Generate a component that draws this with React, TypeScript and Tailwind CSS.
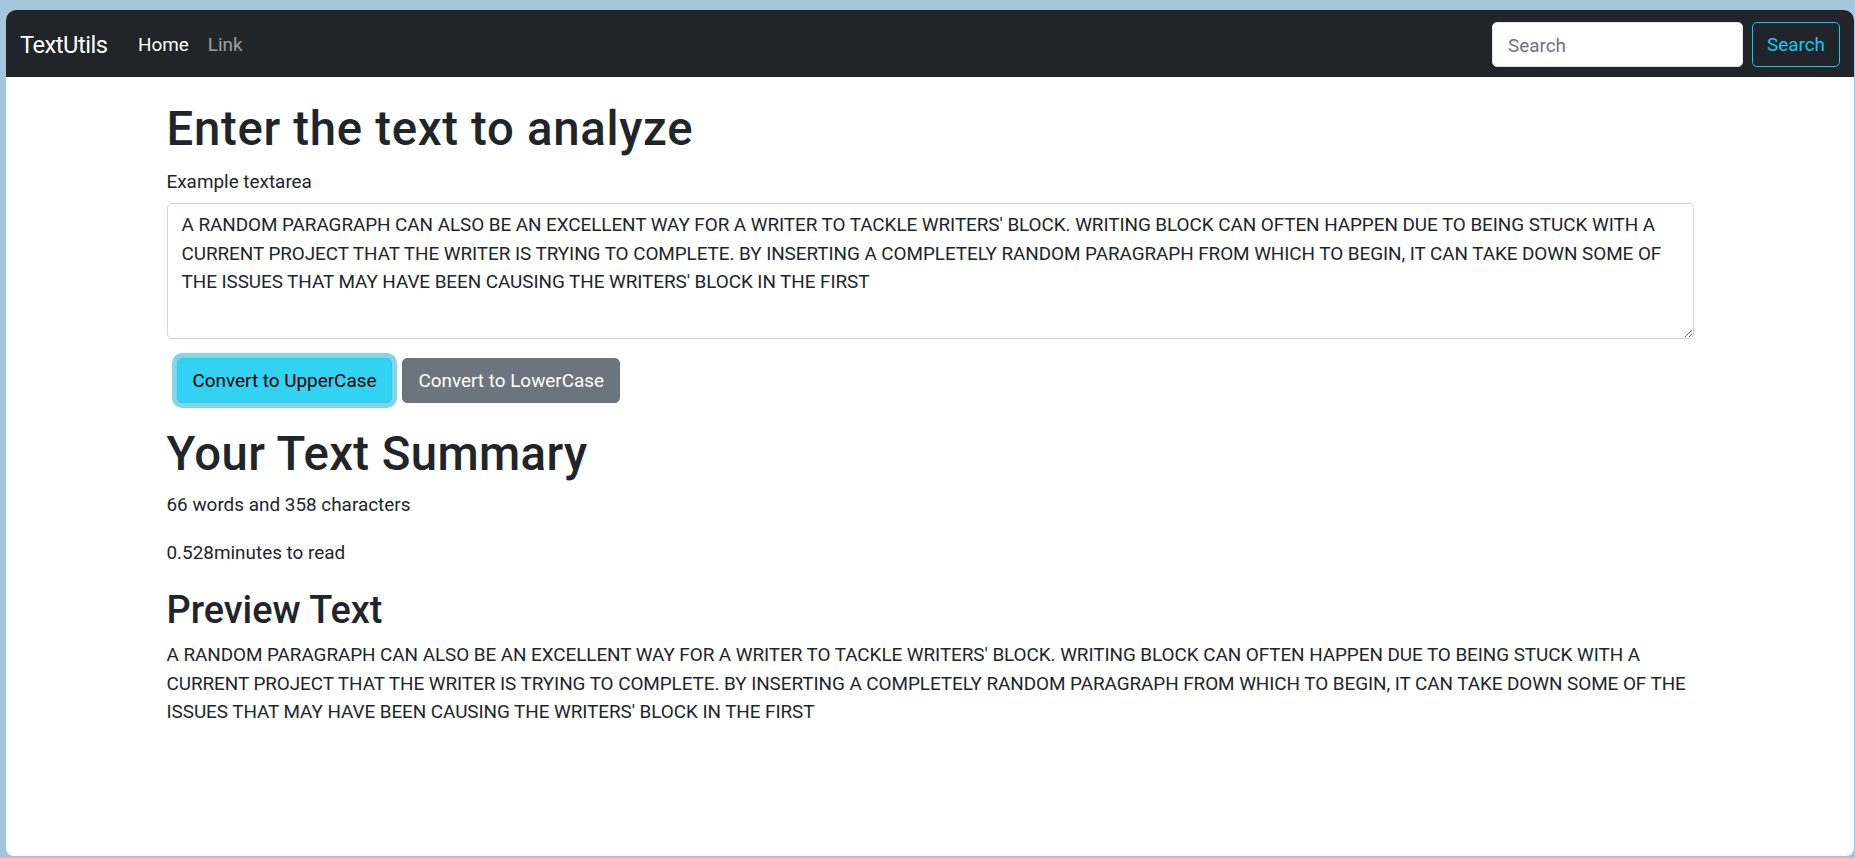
import { useState } from 'react';

const initialText =
    "A RANDOM PARAGRAPH CAN ALSO BE AN EXCELLENT WAY FOR A WRITER TO TACKLE WRITERS' BLOCK. WRITING BLOCK CAN OFTEN HAPPEN DUE TO BEING STUCK WITH A CURRENT PROJECT THAT THE WRITER IS TRYING TO COMPLETE. BY INSERTING A COMPLETELY RANDOM PARAGRAPH FROM WHICH TO BEGIN, IT CAN TAKE DOWN SOME OF THE ISSUES THAT MAY HAVE BEEN CAUSING THE WRITERS' BLOCK IN THE FIRST ";

function Navbar() {
    return (
        <nav className="h-[67px] shrink-0 bg-[#212529] px-[14px] flex items-center justify-between">
            <div className="flex items-center pt-[3px]">
                <a href="#" className="text-[23.7px] leading-[35px] tracking-[-0.5px] text-white mr-[21px]">
                    TextUtils
                </a>
                <ul className="flex items-center text-[18.9px] leading-[28px]">
                    <li>
                        <a href="#" className="px-[9.5px] text-white">Home</a>
                    </li>
                    <li>
                        <a href="#" className="px-[9.5px] text-white/55">Link</a>
                    </li>
                </ul>
            </div>

            {/* Search form */}
            <form className="flex items-center gap-[9px] pt-px" onSubmit={(e) => e.preventDefault()}>
                <input
                    type="search"
                    placeholder="Search"
                    aria-label="Search"
                    className="w-[251px] h-[45px] bg-white rounded-[5px] border border-[#dee2e6] px-[15px] pt-[2px] text-[18.9px] text-[#212529] placeholder:text-[#6c757d] outline-none"
                />
                <button
                    type="submit"
                    className="w-[88px] h-[45px] pt-[2px] rounded-[5px] border border-[#0dcaf0] text-[#0dcaf0] text-[18.9px]"
                >
                    Search
                </button>
            </form>
        </nav>
    );
}

function TextForm() {
    const [text, setText] = useState(initialText);

    const words = text.split(' ').length;
    const minutes = Math.round(0.008 * words * 1000) / 1000;

    return (
        <>
            {/* Input area */}
            <div className="w-[1527px] mx-auto">
                <h1 className="mt-[24px] mb-[10px] text-[47.3px] leading-[56.8px] tracking-[0.7px] font-medium">
                    Enter the text to analyze
                </h1>
                <div className="mb-[19px]">
                    <label htmlFor="myBox" className="block mb-[7px] text-[18.9px] leading-[28.4px]">
                        Example textarea
                    </label>
                    <textarea
                        id="myBox"
                        value={text}
                        onChange={(e) => setText(e.target.value)}
                        className="block w-full h-[136px] resize-y rounded-[5px] border border-[#ced4da] px-[14px] py-[7px] text-[18.9px] leading-[28.4px] tracking-[-0.06px] text-[#212529] outline-none"
                    />
                </div>
                <div className="flex gap-[10px] pl-[10px]">
                    <button
                        onClick={() => setText(text.toUpperCase())}
                        className="h-[45px] px-[15px] rounded-[5px] border border-[#25cff2] bg-[#31d2f2] text-black text-[18.9px] shadow-[0_0_0_5px_rgba(11,172,204,0.5)]"
                    >
                        Convert to UpperCase
                    </button>
                    <button
                        onClick={() => setText(text.toLowerCase())}
                        className="h-[45px] px-[15px] rounded-[5px] border border-[#6c757d] bg-[#6c757d] text-white text-[18.9px]"
                    >
                        Convert to LowerCase
                    </button>
                </div>
            </div>

            {/* Summary */}
            <div className="w-[1527px] mx-auto">
                <h1 className="mt-[23px] mb-[8px] text-[47.3px] leading-[56.8px] tracking-[0.4px] font-medium">
                    Your Text Summary
                </h1>
                <p className="mb-[20px] text-[18.9px] leading-[28.4px]">
                    {words} words and {text.length} characters
                </p>
                <p className="text-[18.9px] leading-[28.4px]">{minutes}minutes to read</p>
                <h2 className="mt-[20px] mb-[8px] text-[37.9px] leading-[45.4px] font-medium">
                    Preview Text
                </h2>
                <p className="text-[18.9px] leading-[28.4px] tracking-[-0.06px]">{text}</p>
            </div>
        </>
    );
}

export default function App() {
    return (
        <div className="h-screen w-full bg-[#a5c5da] pt-[10px] pl-[6px] pr-px pb-[2px] font-[Roboto,sans-serif] text-[#212529]">
            <div className="h-full bg-white rounded-t-[10px] rounded-b-[8px] overflow-hidden flex flex-col">
                <Navbar />
                <main className="flex-1">
                    <TextForm />
                </main>
            </div>
        </div>
    );
}
